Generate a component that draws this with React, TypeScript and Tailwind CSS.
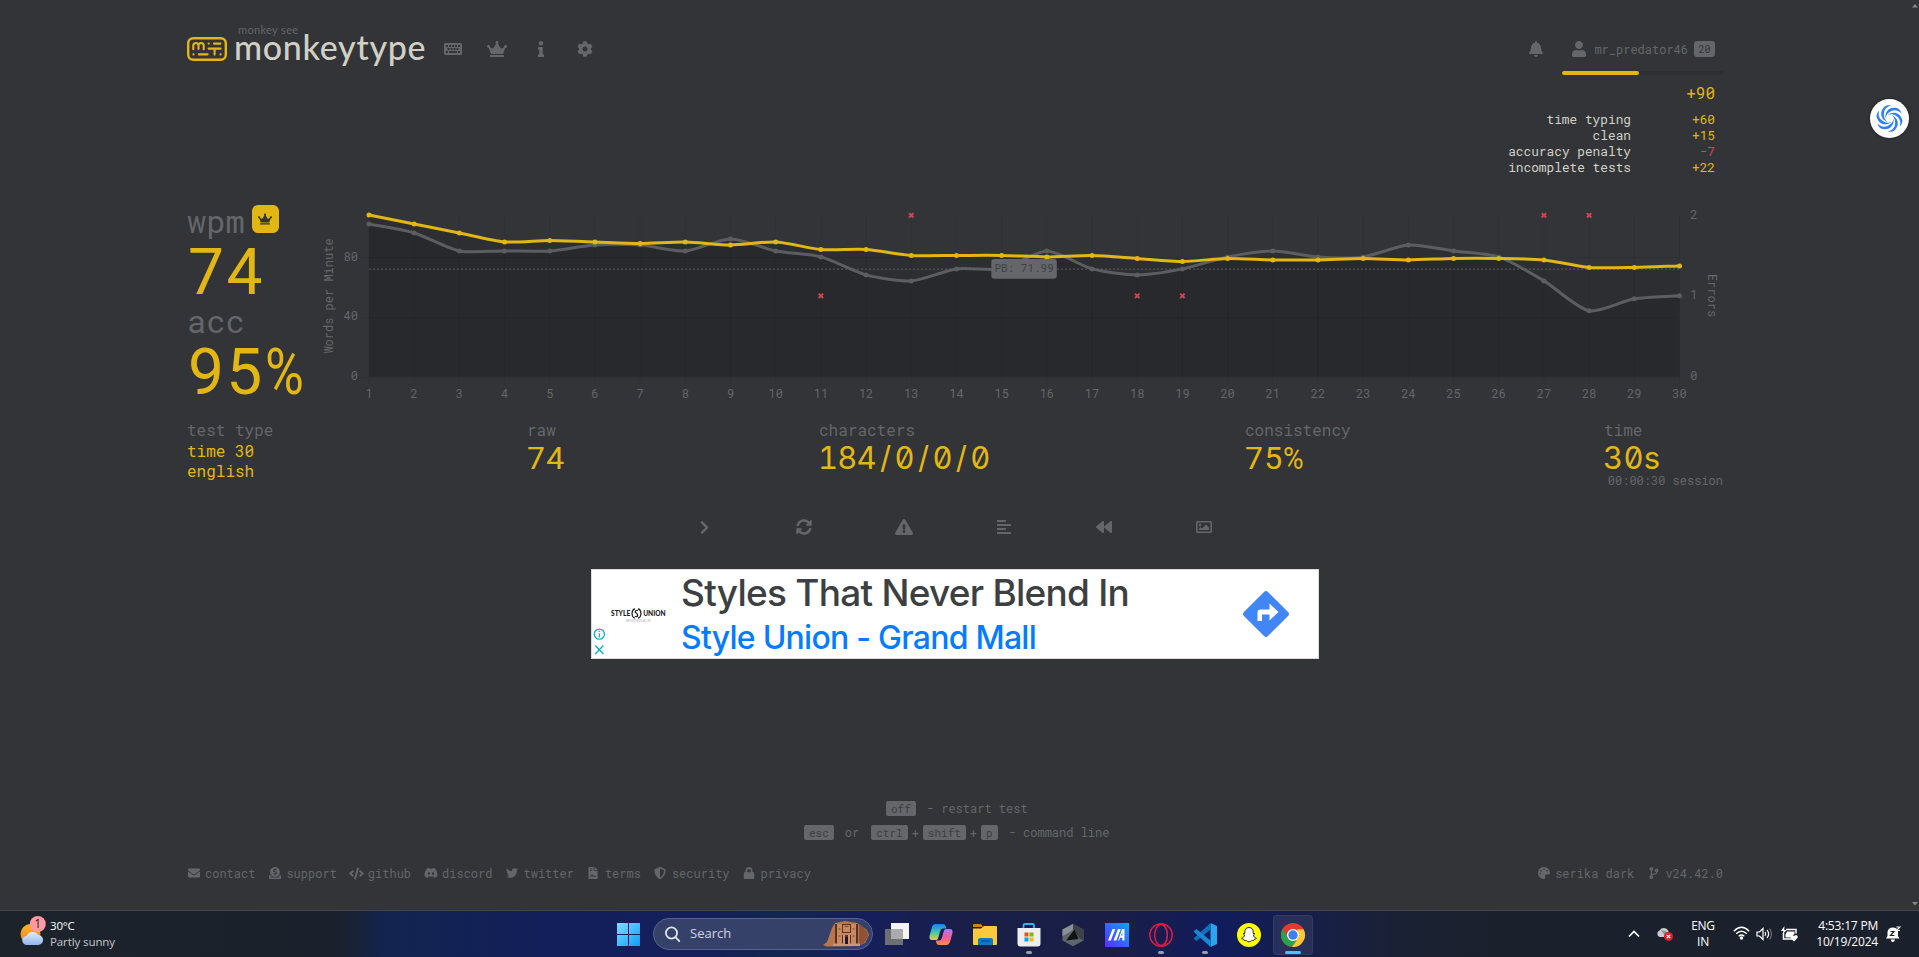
import type { ReactNode } from "react";
import {
  FaKeyboard,
  FaCrown,
  FaInfo,
  FaCog,
  FaBell,
  FaUser,
  FaChevronRight,
  FaSyncAlt,
  FaExclamationTriangle,
  FaAlignLeft,
  FaBackward,
  FaRegImage,
  FaEnvelope,
  FaDonate,
  FaCode,
  FaDiscord,
  FaTwitter,
  FaFileContract,
  FaShieldAlt,
  FaLock,
  FaPalette,
  FaCodeBranch,
} from "react-icons/fa";

const MAIN = "#e2b714";
const SUB = "#646669";

const wpm = [
  108, 102, 96, 90, 91, 90, 89, 90, 88, 90, 85, 85, 81, 81, 81, 80, 81, 79, 77, 79, 78, 78, 79, 78, 79, 79, 78, 73,
  73, 74,
];
const raw = [
  102, 96, 84, 84, 84, 88, 88, 84, 92, 84, 80, 68, 64, 72, 72, 84, 72, 68, 72, 80, 84, 80, 80, 88, 84, 80, 64, 44, 52,
  54,
];
const errors: [number, number][] = [
  [11, 1],
  [13, 2],
  [18, 1],
  [19, 1],
  [27, 2],
  [28, 2],
];

const X0 = 49;
const STEP = 45.19;
const Y0 = 171.7;
const UNIT = 161.7 / 108;
const px = (i: number) => X0 + i * STEP;
const py = (v: number) => Y0 - v * UNIT;

function curve(values: number[]) {
  const t = 0.25;
  const p = values.map((v, i) => ({ x: px(i), y: py(v) }));
  const cps = p.map((c, i) => {
    const a = p[i - 1] ?? c;
    const b = p[i + 1] ?? c;
    const d1 = Math.hypot(c.x - a.x, c.y - a.y);
    const d2 = Math.hypot(b.x - c.x, b.y - c.y);
    const fa = (t * d1) / (d1 + d2);
    const fb = (t * d2) / (d1 + d2);
    return {
      before: { x: c.x - fa * (b.x - a.x), y: c.y - fa * (b.y - a.y) },
      after: { x: c.x + fb * (b.x - a.x), y: c.y + fb * (b.y - a.y) },
    };
  });
  let d = `M${p[0].x} ${p[0].y}`;
  for (let i = 1; i < p.length; i++) {
    const c1 = cps[i - 1].after;
    const c2 = cps[i].before;
    d += ` C${c1.x} ${c1.y} ${c2.x} ${c2.y} ${p[i].x} ${p[i].y}`;
  }
  return d;
}

function Chart() {
  const end = px(29);
  const close = ` L${end} ${Y0} L${X0} ${Y0} Z`;
  const rawPath = curve(raw);
  const wpmPath = curve(wpm);
  return (
    <svg width="1403" height="204" viewBox="0 0 1403 204" className="block shrink-0" fontSize="12" fill={SUB}>
      <path d={rawPath + close} fill="#000" fillOpacity="0.1" />
      <path d={wpmPath + close} fill="#000" fillOpacity="0.1" />
      <g stroke="#000" strokeOpacity="0.06" strokeWidth="1">
        {wpm.map((_, i) => (
          <line key={i} x1={px(i)} x2={px(i)} y1="10" y2="179.5" />
        ))}
        {[0, 40, 80].map((v) => (
          <line key={v} x1={X0 - 8} x2={end} y1={Math.round(py(v)) + 0.5} y2={Math.round(py(v)) + 0.5} />
        ))}
      </g>
      <path d={rawPath} fill="none" stroke="#5c5d60" strokeWidth="3" />
      {raw.map((v, i) => (
        <circle key={i} cx={px(i)} cy={py(v)} r="2.5" fill="#5c5d60" />
      ))}
      <line
        x1={X0}
        x2={end}
        y1={py(71.99) + 0.3}
        y2={py(71.99) + 0.3}
        stroke={SUB}
        strokeOpacity="0.75"
        strokeWidth="1.2"
        strokeDasharray="2 2"
      />
      <path d={wpmPath} fill="none" stroke={MAIN} strokeWidth="3" />
      {wpm.map((v, i) => (
        <circle key={i} cx={px(i)} cy={py(v)} r="2.5" fill={MAIN} />
      ))}
      <rect x="671.3" y="54" width="65.5" height="19.7" rx="3" fill={SUB} />
      <text x="674.4" y="67.3" fontSize="11" fill="#3f4144">
        PB: 71.99
      </text>
      {errors.map(([s, n]) => {
        const x = px(s - 1);
        const y = n === 2 ? 10.3 : 90.8;
        return (
          <path key={s} d={`M${x - 2.2} ${y - 2.2}l4.4 4.4M${x + 2.2} ${y - 2.2}l-4.4 4.4`} stroke="#ca4754" strokeWidth="2" />
        );
      })}
      <g textAnchor="middle">
        {wpm.map((_, i) => (
          <text key={i} x={px(i)} y="193.3">
            {i + 1}
          </text>
        ))}
      </g>
      <g textAnchor="end">
        {[0, 40, 80].map((v) => (
          <text key={v} x="38" y={py(v) + 3.6}>
            {v}
          </text>
        ))}
      </g>
      {[0, 1, 2].map((v) => (
        <text key={v} x="1370.2" y={Y0 - v * 80.85 + 3.6}>
          {v}
        </text>
      ))}
      <text transform="translate(13 91) rotate(-90)" textAnchor="middle">
        Words per Minute
      </text>
      <text transform="translate(1387.5 90.5) rotate(90)" textAnchor="middle">
        Errors
      </text>
    </svg>
  );
}

function Logo() {
  return (
    <svg width="40" height="24" viewBox="0 0 40 24" fill="none" stroke={MAIN} strokeWidth="2.1" strokeLinecap="round" strokeLinejoin="round">
      <rect x="1.2" y="1.2" width="37.6" height="21.6" rx="5" strokeWidth="2.4" />
      <path d="M6.3 12.2V8.6a2.6 2.6 0 0 1 5.2 0V12M11.5 8.6a2.6 2.6 0 0 1 5.2 0V12.2" />
      <path d="M21.6 6.6h.1M27 6.6h6.4M21.6 11.6h12M27.6 12v5.6M6.4 17.4h.1M11.8 17.4h8.8M33.5 17.4h.1" />
    </svg>
  );
}

function Key({ children }: { children: ReactNode }) {
  return (
    <span className="flex h-[15px] items-center rounded-[2px] bg-[#646669] px-[5px] text-[11px] leading-[15px] text-[#3d3f42]">
      {children}
    </span>
  );
}

function FootLink({ icon, label }: { icon: ReactNode; label: string }) {
  return (
    <div className="flex items-center gap-1">
      <span className="flex w-[15px] shrink-0 justify-center">{icon}</span>
      <span>{label}</span>
    </div>
  );
}

function Stat({ label, children }: { label: string; children: ReactNode }) {
  return (
    <div>
      <div className="-mt-[2px] h-[22px] text-[16px] leading-[22px]">{label}</div>
      {children}
    </div>
  );
}

const big = "h-8 pt-[1px] font-[Roboto] text-[32px] leading-8 tracking-[1.2px] text-[#e2b714]";
const bigZero = "h-8 pt-[1px] font-[Inter] text-[31px] leading-8 tabular-nums slashed-zero text-[#e2b714]";

function Slash() {
  return <span className="inline-block w-[18.6px] text-center">/</span>;
}

function XpRow({ label, value, bad }: { label: string; value: string; bad?: boolean }) {
  return (
    <div className="flex h-4 justify-end">
      <span className="text-[#d1d0c5]">{label}</span>
      <span className={bad ? "w-[84px] text-right text-[#ca4754]" : "w-[84px] text-right text-[#e2b714]"}>{value}</span>
    </div>
  );
}

function Header() {
  return (
    <header className="flex h-[205px] justify-between text-[#646669]">
      <div className="flex h-20 pt-6">
        <div className="pt-[13px]">
          <Logo />
        </div>
        <div className="ml-[7px] w-[193px] font-[Lato]">
          <div className="h-[5px] pl-[4px] text-[11px] leading-[12px] tracking-[0.35px]">monkey see</div>
          <div className="text-[34px] leading-[36px] font-medium tracking-[0.7px] whitespace-nowrap text-[#d1d0c5]">monkeytype</div>
        </div>
        <nav className="ml-[15px] flex h-[50px] items-center">
          <span className="flex w-[22px] justify-center"><FaKeyboard size={18} /></span>
          <span className="ml-[22px] flex w-[22px] justify-center"><FaCrown size={20} /></span>
          <span className="ml-[22px] flex w-[22px] justify-center"><FaInfo size={16} /></span>
          <span className="ml-[22px] flex w-[22px] justify-center"><FaCog size={16} /></span>
        </nav>
      </div>
      <div className="flex w-[230px] flex-col items-end pt-[41px]">
        <div className="flex h-4 items-center pr-2">
          <FaBell size={16} />
          <FaUser size={16} className="ml-[27px]" />
          <span className="ml-[7px] text-[12px]">mr_predator46</span>
          <span className="ml-[6px] flex h-4 w-[21px] items-center justify-center rounded-[3px] bg-[#646669] text-[10px] text-[#323437]">20</span>
        </div>
        <div className="mt-[14px] h-1 w-[161px] rounded-full bg-[#2c2e31]">
          <div className="h-1 w-[77px] rounded-full bg-[#e2b714]" />
        </div>
        <div className="w-full pr-2 text-right text-[12.8px] leading-4">
          <div className="mt-2 mb-2 h-5 text-[16px] leading-5 text-[#e2b714]">+90</div>
          <XpRow label="time typing" value="+60" />
          <XpRow label="clean" value="+15" />
          <XpRow label="accuracy penalty" value="-7" bad />
          <XpRow label="incomplete tests" value="+22" />
        </div>
      </div>
    </header>
  );
}

function Ad() {
  return (
    <div className="flex h-[90px] w-[728px] border border-[#dcdcdc] bg-white font-[Inter]">
      <div className="flex w-[89px] flex-col pl-px">
        <div className="mt-[38px] flex items-center pl-[18px] font-[Lato] text-[6.6px] leading-[9px] font-black whitespace-nowrap text-[#222]">
          STYLE
          <svg width="11" height="11" viewBox="0 0 11 11" fill="none" stroke="#222" strokeWidth="1.3" className="mx-px">
            <path d="M4 1Q1.500 1 1 5.500Q1.500 10 4 10M7 1Q9.500 1 10 5.500Q9.500 10 7 10M6.800 2.500Q4 2 4.300 4.500Q7 5.500 6.600 8Q5.500 9.200 4 8.300" />
          </svg>
          UNION
        </div>
        <div className="h-[5px] pl-[33px] text-[3px] leading-[4px] text-[#aaa]">NEVER BLEND IN</div>
        <svg width="13" height="32" viewBox="0 0 13 32" fill="none" stroke="#00aecd" strokeWidth="1.3" className="mt-[4px]">
          <circle cx="6.300" cy="6.500" r="5.400" />
          <path d="M6.300 5.500v4.500M6.300 3v1.300M2 18.500l8.600 9M10.600 18.500l-8.600 9" />
        </svg>
      </div>
      <div className="w-[520px] whitespace-nowrap">
        <div className="mt-px h-11 text-[37px] leading-[44px] font-[450] tracking-[-0.75px] text-[#3c4043]">Styles That Never Blend In</div>
        <div className="h-10 text-[32px] leading-[46px] font-[450] tracking-[-0.75px] text-[#067bff]">Style Union - Grand Mall</div>
      </div>
      <svg width="46" height="46" viewBox="0 0 46 46" className="mt-[21px] ml-[41.5px]">
        <path d="M21 .9a3 3 0 0 1 4 0L45.100 21a3 3 0 0 1 0 4L25 45.100a3 3 0 0 1-4 0L.9 25a3 3 0 0 1 0-4Z" fill="#4285f4" />
        <path d="M14.500 30v-8.500q0-3 3-3h9v-6l9 8.500-9 8.500v-6h-7.500V30Z" fill="#fff" />
      </svg>
    </div>
  );
}

function TaskIcon({ children, dot, active }: { children: ReactNode; dot?: boolean; active?: boolean }) {
  return (
    <div className="flex w-11 justify-center">
      <div
        className={
          active
            ? "flex h-10 w-10 flex-col items-center rounded-[4px] border border-white/5 bg-white/8 pt-[7px]"
            : "flex h-10 w-10 flex-col items-center pt-2"
        }
      >
        <svg width="24" height="24" viewBox="0 0 24 24" className="shrink-0">
          {children}
        </svg>
        {dot && <div className="mt-[4px] h-[3px] w-[6px] rounded-full bg-[#9a9eac]" />}
        {active && <div className="mt-[4px] h-[3px] w-4 rounded-full bg-[#4cc2ff]" />}
      </div>
    </div>
  );
}

function Taskbar() {
  return (
    <footer className="flex h-[47px] border-t border-[#43464e] bg-[linear-gradient(90deg,#1d232b_0,#1b212c_340px,#12244f_385px,#131f5a_540px,#141f5b_700px,#12264f_780px,#151f5c_860px,#191f48_960px,#1a1e46_1110px,#111c5c_1220px,#171f48_1310px,#1a2134_1400px,#1b212c_1500px)] font-['Open_Sans'] text-[12px] text-white">
      <div className="flex w-[609px] pl-5">
        <svg width="30" height="34" viewBox="0 0 30 34" className="mt-[4px]">
          <defs>
            <linearGradient id="sun" x1="0" y1="0" x2="0" y2="1">
              <stop offset="0" stopColor="#fbb829" />
              <stop offset="1" stopColor="#f07a1c" />
            </linearGradient>
            <linearGradient id="cloud" x1="0" y1="0" x2="0" y2="1">
              <stop offset="0" stopColor="#e3eefc" />
              <stop offset="1" stopColor="#8fb4ee" />
            </linearGradient>
          </defs>
          <circle cx="10.500" cy="19" r="10" fill="url(#sun)" />
          <path d="M7 30a4.600 4.600 0 0 1-.3-9.200 6.500 6.500 0 0 1 11.500-.8A5 5 0 0 1 18 30Z" fill="url(#cloud)" />
          <circle cx="17.800" cy="9" r="8" fill="#ff99a4" />
          <text x="17.600" y="13.300" fontSize="12" textAnchor="middle" fill="#2b1a1c">1</text>
        </svg>
        <div className="pt-[7px] text-[11.5px] leading-4">
          <div className="tracking-[-0.2px]">30°C</div>
          <div className="tracking-[-0.1px] text-[#c3c7cb]">Partly sunny</div>
        </div>
      </div>
      <div className="flex w-11 pt-3 pl-2">
        <svg width="23" height="23" viewBox="0 0 23 23">
          <defs>
            <linearGradient id="win" x1="0" y1="0" x2="1" y2="1">
              <stop offset="0" stopColor="#7fdcff" />
              <stop offset="1" stopColor="#0c9dfb" />
            </linearGradient>
          </defs>
          <path d="M0 0h11v11H0zM12 0h11v11H12zM0 12h11v11H0zM12 12h11v11H12z" fill="url(#win)" />
        </svg>
      </div>
      <div className="mt-[7px] flex h-8 w-[220px] items-center rounded-full border border-[#58628c] bg-[#36416a] pr-[2px] pl-[10px]">
        <svg width="17" height="17" viewBox="0 0 17 17" fill="none" stroke="#dfe3ee" strokeWidth="1.800" strokeLinecap="round">
          <circle cx="7.500" cy="7" r="5.600" />
          <path d="M11.700 11.400l3.600 3.800" />
        </svg>
        <span className="ml-[9px] flex-1 text-[13px] text-[#d0d4e0]">Search</span>
        <svg width="47" height="26" viewBox="0 0 47 26">
          <path d="M0 24L4 21 9 7 12 2 22 0 34 2 44 9 46 14 42 22 35 25 4 25.500Z" fill="#b8764c" />
          <path d="M36 3l8 7 1 5-4 7-5 3z" fill="#8f5233" />
          <path d="M12 3h23v21H12z" fill="#5b2f22" />
          <path d="M14 3h5v20h-5zM28 3h5v20h-5zM20 4h7v7h-7zM18 12h12v2H18z" fill="#c58a62" />
          <path d="M20 14h2v9h-2zM25 14h2v9h-2zM10 22.500h27V25H10z" fill="#cf9670" />
          <path d="M22 16h3v7h-3z" fill="#20163a" />
          <path d="M21.500 5.500h4M15.500 8h2M29.500 8h2M15.500 15h2M29.500 15h2" stroke="#7b452f" />
        </svg>
      </div>
      <div className="ml-[2px] flex pt-1">
        <TaskIcon>
          <path d="M6 0h18v16H6z" fill="#f4f4f4" />
          <path d="M0 6h18v16H0z" fill="#6d6f72" />
          <path d="M6 6h12v10H6z" fill="#a9abaf" />
        </TaskIcon>
        <TaskIcon>
          <defs>
            <linearGradient id="cpa" x1="0" y1="0" x2="0" y2="1">
              <stop offset="0" stopColor="#1f7ff0" />
              <stop offset=".5" stopColor="#3cc4b4" />
              <stop offset="1" stopColor="#e8cf3a" />
            </linearGradient>
            <linearGradient id="cpb" x1="0" y1="0" x2="0" y2="1">
              <stop offset="0" stopColor="#a77bf5" />
              <stop offset=".5" stopColor="#ee5b9b" />
              <stop offset="1" stopColor="#fb8a4a" />
            </linearGradient>
          </defs>
          <path d="M6 1h8q2 0 2.600 2l.7 2.500H14q-2 0-2.600 2L9 15.500Q8.500 17 7 17H3Q0 17 .5 13L3 4Q4 1 6 1Z" fill="url(#cpa)" />
          <path d="M18 22h-8q-2 0-2.600-2l-.7-2.500H10q2 0 2.600-2L15 7.500Q15.500 6 17 6h4q3 0 2.500 4L21 19q-1 3-3 3Z" fill="url(#cpb)" />
        </TaskIcon>
        <TaskIcon>
          <path d="M0 2q0-1 1-1h7l2 3H0z" fill="#c88a05" />
          <path d="M0 5.500h8L11 3h12q1 0 1 1v17q0 1-1 1H1q-1 0-1-1z" fill="#fdc93c" />
          <path d="M5 17q0-2 2-2h11q2 0 2 2v5H5z" fill="#1277c9" />
          <path d="M8 18h9" stroke="#0b5597" strokeWidth="1.500" />
        </TaskIcon>
        <TaskIcon dot>
          <path d="M6.500 6V2.500Q6.500 1 8 1h7.500Q17 1 17 2.500V6" fill="none" stroke="#2fb6f0" strokeWidth="1.800" />
          <path d="M.5 5h23v15.500q0 3-3 3h-17q-3 0-3-3z" fill="#eeeeee" />
          <path d="M7.500 9.500h4v4h-4z" fill="#f0501e" />
          <path d="M12.500 9.500h4v4h-4z" fill="#7db902" />
          <path d="M7.500 14.500h4v4h-4z" fill="#04a3ee" />
          <path d="M12.500 14.500h4v4h-4z" fill="#fdb802" />
        </TaskIcon>
        <TaskIcon>
          <path d="M12 1L22.500 6.500v11L12 23.300 1.500 17.500v-11Z" fill="#5f666b" />
          <path d="M12 1L1.500 6.500V13L9 9l3-3z" fill="#8b9296" />
          <path d="M12 1l10.500 5.500v11L18 15 12 5.500z" fill="#3c4246" />
          <path d="M13.500 6.500L17.500 16 5 17.500Z" fill="#111417" />
        </TaskIcon>
        <TaskIcon>
          <defs>
            <linearGradient id="ma" x1="0" y1="1" x2="1" y2="0">
              <stop offset="0" stopColor="#5a2cff" />
              <stop offset="1" stopColor="#0ba5ff" />
            </linearGradient>
          </defs>
          <path d="M0 0h24v24H0z" fill="url(#ma)" />
          <path d="M3 17.500L7.500 6h2.800L5.800 17.500zM8.500 17.500L13 6h2.800l-4.500 11.500z" fill="#fff" />
          <path d="M17 6h2.500v11.500h-2.200v-2.800h-2.500l1-2.200h1.500V9l-3.200 8.500h-1z" fill="#fff" />
        </TaskIcon>
        <TaskIcon dot>
          <circle cx="12" cy="12" r="11.200" fill="none" stroke="#df1b45" strokeWidth="1.500" />
          <ellipse cx="12" cy="12" rx="6.300" ry="10.500" fill="none" stroke="#df1b45" strokeWidth="1.500" />
          <path d="M15 1.500Q18.500 5 18.500 12T15 22.500" fill="none" stroke="#df1b45" strokeWidth="1" />
        </TaskIcon>
        <TaskIcon dot>
          <path d="M17.500 0L24 3v18l-6.500 3z" fill="#2ba4ef" />
          <path d="M17.500 0v6.500L3.500 18 .5 15.500z" fill="#0f6fb8" />
          <path d="M17.500 24v-6.500L3.500 6 .5 8.500z" fill="#1b86d1" />
        </TaskIcon>
        <TaskIcon>
          <circle cx="12" cy="12" r="12" fill="#fffc00" />
          <path
            d="M12 4.500c-3 0-4.300 2.200-4.200 4.500v1.500l-1.700.2 1.500 1.300c-.2 1.700-1.300 2.600-3 3.200.3.900 1.200.9 2.200 1.100l.5 1.200c1.600-.3 2.400.2 3.200.9q1.500 1 3 0c.8-.7 1.600-1.200 3.200-.9l.5-1.200c1-.2 1.900-.2 2.200-1.100-1.700-.6-2.800-1.500-3-3.200l1.500-1.300-1.700-.2V9c.1-2.300-1.200-4.500-4.200-4.500z"
            fill="#fff"
            stroke="#111"
            strokeWidth=".9"
          />
        </TaskIcon>
        <TaskIcon active>
          <circle cx="12" cy="12" r="12" fill="#e33b2e" />
          <path d="M1.600 6A12 12 0 0 0 11 24l6-9-10.200 0z" fill="#27a34f" />
          <path d="M22.400 6.200A12 12 0 0 1 11 24l6.200-9-1-8.800z" fill="#fcc934" />
          <circle cx="12" cy="12" r="6" fill="#fff" />
          <circle cx="12" cy="12" r="4.700" fill="#3c7ff0" />
        </TaskIcon>
      </div>
      <div className="ml-[313px] flex">
        <svg width="12" height="8" viewBox="0 0 12 8" fill="none" stroke="#fff" strokeWidth="1.600" className="mt-[19px]">
          <path d="M1 6.500l5-5 5 5" />
        </svg>
        <svg width="18" height="16" viewBox="0 0 18 16" className="mt-[16px] ml-[16px]">
          <path d="M3.500 10a3.500 3.500 0 0 1 0-6.500Q6 0 10 1.500q3 1.500 2.500 5V10z" fill="#c9cccf" />
          <path d="M5 3l7 2-2 5z" fill="#8d9194" />
          <circle cx="12.500" cy="9.500" r="4.500" fill="#d8222c" />
          <path d="M10.800 7.800l3.400 3.400M14.200 7.800l-3.400 3.400" stroke="#fff" strokeWidth="1.200" />
        </svg>
        <div className="ml-[17px] w-[24px] pt-[7px] text-center text-[12px] leading-4 tracking-[-0.3px]">
          <div>ENG</div>
          <div>IN</div>
        </div>
        <svg width="17" height="14" viewBox="0 0 17 14" fill="none" stroke="#fff" strokeWidth="1.400" className="mt-[15px] ml-[18px]">
          <path d="M.8 5.200Q8.500-2.500 16.200 5.200M3.200 7.800q5.300-5 10.600 0M5.700 10.200q2.800-2.500 5.600 0" />
          <circle cx="8.500" cy="12" r="1" fill="#fff" />
        </svg>
        <svg width="17" height="14" viewBox="0 0 17 14" fill="none" stroke="#fff" strokeWidth="1.200" className="mt-[16px] ml-[6px]">
          <path d="M1 5v4h2.500L7 12.500v-11L3.500 5z" />
          <path d="M9 5q1.500 2 0 4M11 3q3.200 4 0 8" />
          <path d="M13.500 1.500q4 5.500 0 11" stroke="#6b7078" />
        </svg>
        <svg width="18" height="17" viewBox="0 0 18 17" className="mt-[15px] ml-[8px]">
          <path d="M5 3.500h10v4M2.500 7v6H11" fill="none" stroke="#fff" strokeWidth="1.500" />
          <path d="M6 5.500h7.500V8L9 11.500H4.500v-3zM3.500 0L0 5h2.500L1.500 8.500 5.500 4H3.200z" fill="#fff" />
          <path d="M13 15.500L9.500 12q-.8-2.500 1.500-3 1.300 0 2 1.200.8-1.200 2-1.200 2.300.5 1.500 3z" fill="#fff" />
        </svg>
        <div className="ml-[7px] w-[72px] pt-[7px] text-right text-[12px] leading-4 tracking-[-0.2px] whitespace-nowrap">
          <div>4:53:17 PM</div>
          <div>10/19/2024</div>
        </div>
        <svg width="15" height="17" viewBox="0 0 15 17" className="mt-[15px] ml-[8px]">
          <path d="M0 12.500l1.500-2.500V6q.5-4.500 5.500-4.500 3.500 0 5 3V10l1.500 2.500zM4.500 13.500H9q-.5 2.500-2.200 2.500T4.500 13.500z" fill="#fff" />
          <path d="M4.500 5.500h3.500l-3.500 4H8.500" fill="none" stroke="#1b212c" strokeWidth="1.200" />
          <path d="M10.500 1h3.500l-3.500 3.500h3.500" fill="none" stroke="#fff" strokeWidth="1.200" />
        </svg>
      </div>
    </footer>
  );
}

export default function App() {
  return (
    <div className="relative flex h-[957px] w-[1919px] flex-col overflow-hidden bg-[#323437] font-['Roboto_Mono','Liberation_Mono',monospace] text-[#646669]">
      <div className="mx-[187px] flex w-[1536px] flex-1 flex-col">
        <Header />
        <main>
          <section className="flex h-[204px]">
            <div className="w-[133px]">
              <div className="flex h-9 text-[32px] leading-8">
                wpm
                <span className="ml-[7px] flex h-7 w-[27px] items-center justify-center rounded-[6px] bg-[#e2b714] text-[#323437]">
                  <FaCrown size={14} />
                </span>
              </div>
              <div className="h-16 pl-px font-[Roboto] text-[64px] leading-[64px] tracking-[2.5px] text-[#e2b714]">74</div>
              <div className="h-9 text-[32px] leading-8">acc</div>
              <div className="h-16 pl-px font-[Roboto] text-[64px] leading-[64px] tracking-[2.3px] whitespace-nowrap text-[#e2b714]">
                95<span className="inline-block origin-left scale-x-[0.83]">%</span>
              </div>
            </div>
            <Chart />
          </section>
          <section className="grid h-[72px] grid-cols-[340px_292px_426px_359px_119px] pt-[12px]">
            <Stat label="test type">
              <div className="text-[16px] leading-5 text-[#e2b714]">
                <div>time 30</div>
                <div>english</div>
              </div>
            </Stat>
            <Stat label="raw">
              <div className={big}>74</div>
            </Stat>
            <Stat label="characters">
              <div className={`${bigZero} -ml-px tracking-[-0.8px]`}>
                184
                <Slash />0<Slash />0<Slash />0
              </div>
            </Stat>
            <Stat label="consistency">
              <div className={big}>
                75<span className="inline-block origin-left scale-x-[0.88]">%</span>
              </div>
            </Stat>
            <Stat label="time">
              <div className={`${bigZero} -ml-px tracking-[0.3px]`}>30s</div>
              <div className="-mt-px text-right text-[12px] leading-4">00:00:30 session</div>
            </Stat>
          </section>
          <div className="ml-[467px] flex h-[92px] w-[600px] pt-9">
            {[
              <FaChevronRight size={15} />,
              <FaSyncAlt size={16} />,
              <FaExclamationTriangle size={18} />,
              <FaAlignLeft size={16} />,
              <FaBackward size={16} />,
              <FaRegImage size={16} />,
            ].map((icon, i) => (
              <span key={i} className="flex h-5 w-[100px] items-center justify-center">
                {icon}
              </span>
            ))}
          </div>
          <div className="-mt-1 ml-[404px]">
            <Ad />
          </div>
        </main>
        <div className="mt-[142px] flex flex-col text-[12px]">
          <div className="ml-[699px] flex h-[15px] items-center">
            <Key>off</Key>
            <span className="-mt-[2px] ml-[11px]">- restart test</span>
          </div>
          <div className="mt-[9px] ml-[617px] flex h-[15px] items-center">
            <Key>esc</Key>
            <span className="-mt-[2px] mr-3 ml-[11px]">or</span>
            <Key>ctrl</Key>
            <span className="mx-1">+</span>
            <Key>shift</Key>
            <span className="mx-1">+</span>
            <Key>p</Key>
            <span className="-mt-[2px] ml-[11px]">- command line</span>
          </div>
        </div>
        <div className="mt-6 flex h-[18px] items-center justify-between text-[12px]">
          <div className="-ml-px flex gap-3">
            <FootLink icon={<FaEnvelope />} label="contact" />
            <FootLink icon={<FaDonate />} label="support" />
            <FootLink icon={<FaCode size={15} />} label="github" />
            <FootLink icon={<FaDiscord size={14} />} label="discord" />
            <FootLink icon={<FaTwitter />} label="twitter" />
            <FootLink icon={<FaFileContract />} label="terms" />
            <FootLink icon={<FaShieldAlt />} label="security" />
            <FootLink icon={<FaLock />} label="privacy" />
          </div>
          <div className="flex gap-3">
            <FootLink icon={<FaPalette />} label="serika dark" />
            <FootLink icon={<FaCodeBranch />} label="v24.42.0" />
          </div>
        </div>
      </div>
      <Taskbar />

      <div className="absolute top-[99px] left-[1870px] flex h-[39px] w-[39px] items-center justify-center rounded-full bg-white shadow-[0_0_3px_rgba(0,0,0,0.5)]">
        <svg width="27" height="27" viewBox="-13.500 -13.500 27 27" fill="#2f80f6">
          {[0, 60, 120, 180, 240, 300].map((a) => (
            <path
              key={a}
              transform={`rotate(${a})`}
              d="M-4 0C-5-7 0-12.500 8-10.300 10.500-9 11.500-7 12-5 8.500-8.500 5-9 1.500-7.300-1.500-6-3.500-3.500-4 0Z"
            />
          ))}
        </svg>
      </div>
      <svg width="6" height="4" viewBox="0 0 6 4" className="absolute top-[4px] left-[1912px]">
        <path d="M0 3.500L3 0l3 3.500z" fill="#85878a" />
      </svg>
      <svg width="6" height="4" viewBox="0 0 6 4" className="absolute top-[902px] left-[1912px]">
        <path d="M0 0l3 3.500L6 0z" fill="#85878a" />
      </svg>
    </div>
  );
}
